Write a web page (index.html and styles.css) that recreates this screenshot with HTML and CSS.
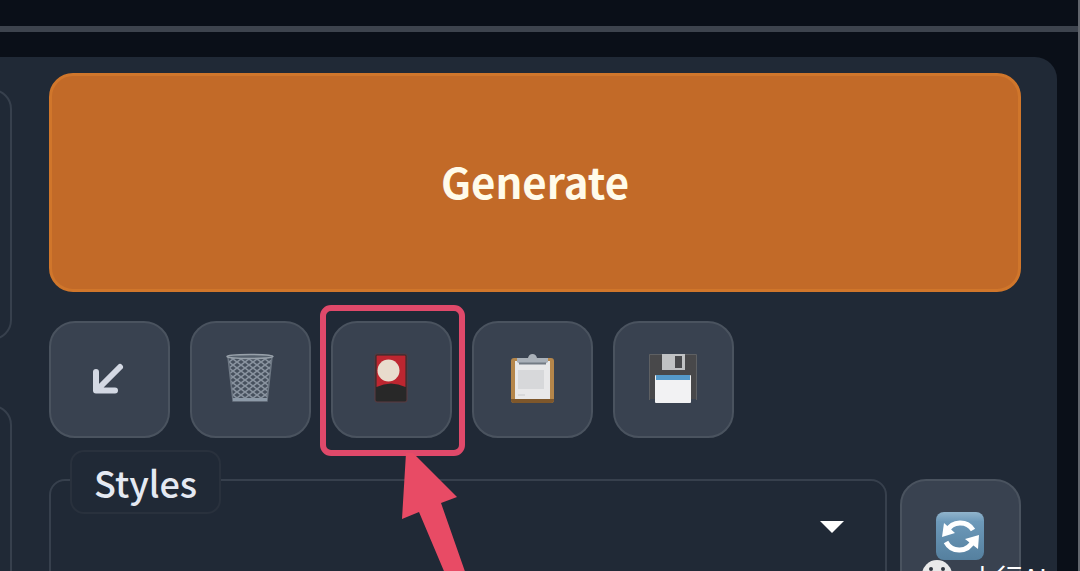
FILE: index.html
```html
<!DOCTYPE html>
<html lang="en">
  <head>
    <meta charset="UTF-8" />
    <meta name="viewport" content="width=device-width, initial-scale=1" />
    <title>Generate</title>
    <link rel="stylesheet" href="styles.css">
  </head>
  <body>
    <div class="topbar"></div>

    <main class="panel">
      <!-- Edges of the neighbouring column -->
      <div class="side">
        <div class="side-box"></div>
        <div class="side-box side-box-tall"></div>
      </div>

      <div class="actions">
        <button class="generate" type="button">Generate</button>

        <!-- Tool buttons -->
        <div class="tools">
          <button class="tool" type="button" aria-label="Read parameters">
            <svg width="48" height="48" viewBox="0 0 48 48">
              <path d="M35 13 12 36M11 18V36.500H30" fill="none" stroke="#d3d8e3" stroke-width="6" stroke-linecap="round" stroke-linejoin="round" />
            </svg>
          </button>
          <button class="tool" type="button" aria-label="Clear prompt">
            <svg width="50" height="50" viewBox="0 0 50 50">
              <defs>
                <pattern id="mesh" width="8" height="6" patternUnits="userSpaceOnUse">
                  <path d="M0 0 8 6M8 0 0 6" stroke="#89939f" stroke-width="1.500" />
                </pattern>
              </defs>
              <path d="M3 4H47L42 48H8Z" fill="#46505d" />
              <path d="M3 4H47L42 48H8Z" fill="url(#mesh)" stroke="#6d7783" stroke-width="1.500" />
              <path d="M8 46.500H42" stroke="#8d9aa8" stroke-width="3" />
              <ellipse cx="25" cy="3.500" rx="23" ry="2" fill="#56616d" stroke="#98a1aa" stroke-width="1.500" />
            </svg>
          </button>
          <div class="marked">
            <button class="tool" type="button" aria-label="Show extra networks">
              <svg width="50" height="50" viewBox="0 0 50 50">
                <rect x="9" y="1" width="32" height="48" rx="2" fill="#282828" />
                <path d="M10.500 2.500H39.500V34Q25 27 10.500 34Z" fill="#bd2630" />
                <rect x="9" y="1" width="32" height="48" rx="2" fill="none" stroke="#5d3b40" />
                <circle cx="22.500" cy="17.500" r="11" fill="#e8dccd" />
              </svg>
            </button>
            <svg class="arrow" width="90" height="130" viewBox="0 0 90 130">
              <path d="M15 0H22L66 44 50 50 78 130H58L28 59 11 66Z" fill="#e84b65" />
            </svg>
          </div>
          <button class="tool" type="button" aria-label="Apply styles">
            <svg width="50" height="50" viewBox="0 0 50 50">
              <rect x="4" y="5" width="43" height="45" rx="3" fill="#b5864a" />
              <path d="M4 46H47V47Q47 50 44 50H7Q4 50 4 47Z" fill="#7e572b" />
              <rect x="8" y="8" width="35" height="38" fill="#e8e8e9" />
              <rect x="11" y="17" width="26" height="19" fill="#d7d8da" />
              <path d="M11 42H18" stroke="#c9cacc" stroke-width="1" />
              <path d="M10 5H21Q22 1 25.500 1T30 5H41V9L38 11H13L10 9Z" fill="#aab1b9" />
              <path d="M12 10.500H39" stroke="#737b84" stroke-width="2" />
            </svg>
          </button>
          <button class="tool" type="button" aria-label="Save style">
            <svg width="50" height="50" viewBox="0 0 50 50">
              <path d="M1 1H47L49 3V46H1Z" fill="#48484a" />
              <path d="M1.500 47V1.500H48.500V47" fill="none" stroke="#5e6063" />
              <rect x="14" y="1" width="23" height="16" fill="#c0c2c4" />
              <rect x="27" y="3" width="7" height="12" fill="#48494c" />
              <rect x="7" y="22" width="36" height="28" rx="1" fill="#f2f2f3" />
              <path d="M8 22H42V27H8Z" fill="#559aca" />
            </svg>
          </button>
        </div>

        <!-- Styles drop-down -->
        <div class="styles-row">
          <div class="field">
            <label class="field-label" for="styles">Styles</label>
            <select class="field-select" id="styles">
              <option value=""></option>
            </select>
            <svg class="caret" width="24" height="12" viewBox="0 0 24 12">
              <path d="M0 0H24L12 12Z" fill="#fff" />
            </svg>
          </div>
          <button class="tool" type="button" aria-label="Refresh styles">
            <svg width="48" height="48" viewBox="0 0 48 48">
              <defs>
                <linearGradient id="blue" x2="0" y2="1">
                  <stop offset="0" stop-color="#91b4cc" />
                  <stop offset="0.200" stop-color="#6d99b9" />
                  <stop offset="1" stop-color="#55809f" />
                </linearGradient>
              </defs>
              <rect width="48" height="48" rx="8" fill="url(#blue)" />
              <path d="M11 19A15 15 0 0 1 37 18M37 29A15 15 0 0 1 10 30" fill="none" stroke="#fff" stroke-width="5" />
              <path d="M8 11 6 25 19 21ZM43 23 42 37 29 27Z" fill="#fff" />
            </svg>
          </button>
        </div>
      </div>
    </main>

    <div class="watermark">
      <svg width="30" height="30" viewBox="0 0 30 30">
        <circle cx="15" cy="15" r="15" fill="#e9e9e9" />
        <circle cx="9" cy="9" r="2" fill="#30363f" />
        <circle cx="21" cy="9" r="2" fill="#30363f" />
      </svg>
      <span>小行AI</span>
    </div>
  </body>
</html>
```
FILE: styles.css
```css
* {
  box-sizing: border-box;
}
body {
  position: relative;
  display: flex;
  flex-direction: column;
  height: 100vh;
  margin: 0;
  overflow: hidden;
  border-right: 2px solid #62666d;
  background-color: #0a0f18;
  color: #e5e9f2;
  font-family: "Noto Sans CJK SC", "Open Sans", sans-serif;
}
button,
select {
  margin: 0;
  font-family: inherit;
}
svg {
  display: block;
}
.topbar {
  flex: none;
  height: 32px;
  border-bottom: 6px solid #3d434d;
}
.panel {
  display: flex;
  flex: 1;
  gap: 37px;
  min-height: 0;
  margin: 25px 21px 0 0;
  padding-right: 36px;
  border-radius: 0 22px 0 0;
  background-color: #202936;
}

/* Neighbouring column */
.side {
  display: flex;
  flex: none;
  flex-direction: column;
  gap: 65px;
  width: 12px;
  padding-top: 32px;
}
.side-box {
  align-self: flex-end;
  flex: none;
  width: 60px;
  height: 251px;
  border: 2px solid #37404d;
  border-radius: 20px;
}
.side-box-tall {
  height: 300px;
}

/* Buttons */
.actions {
  display: flex;
  flex: 1;
  flex-direction: column;
  min-width: 0;
  padding-top: 16px;
}
.generate {
  flex: none;
  height: 219px;
  padding: 0 0 4px;
  border: 3px solid #d0762b;
  border-radius: 24px;
  background-color: #c26a28;
  color: #fffbea;
  font-size: 42px;
  font-weight: 700;
}
.tools {
  display: flex;
  flex: none;
  gap: 20px;
  margin-top: 29px;
}
.tool {
  display: flex;
  flex: none;
  align-items: center;
  justify-content: center;
  width: 121px;
  height: 117px;
  padding: 0 2px 3px 0;
  border: 2px solid #4a535f;
  border-radius: 26px;
  background-color: #394250;
}
.marked {
  position: relative;
}
.marked::after {
  content: "";
  position: absolute;
  inset: -16px -13px -18px -11px;
  border: 6px solid #e0496a;
  border-radius: 11px;
}
.arrow {
  position: absolute;
  top: 132px;
  left: 60px;
  z-index: 1;
}

/* Styles drop-down */
.styles-row {
  display: flex;
  flex: none;
  gap: 13px;
  margin-top: 41px;
}
.field {
  position: relative;
  flex: 1;
}
.field-label {
  position: absolute;
  top: -29px;
  left: 21px;
  padding: 0 22px;
  border: 2px solid #29313d;
  border-radius: 14px;
  background-color: #202936;
  font-size: 36px;
  font-weight: 500;
  line-height: 60px;
}
.field-select {
  width: 100%;
  height: 117px;
  border: 2px solid #37404d;
  border-radius: 16px;
  background-color: transparent;
  color: inherit;
  font-size: 36px;
  appearance: none;
}
.caret {
  position: absolute;
  top: 42px;
  right: 43px;
  pointer-events: none;
}

.watermark {
  position: absolute;
  top: 560px;
  right: 31px;
  display: flex;
  gap: 17px;
  color: #fff;
  font-size: 27px;
  line-height: 36px;
}
```
